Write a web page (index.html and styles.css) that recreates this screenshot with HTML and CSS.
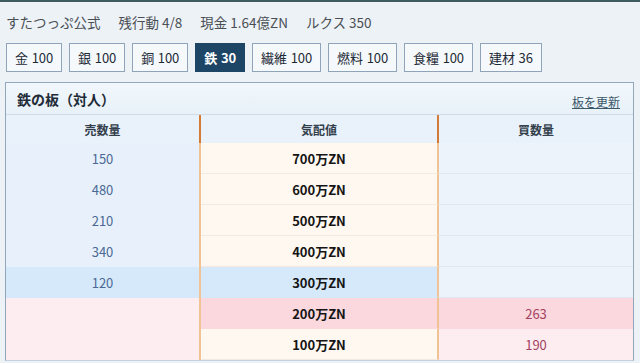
FILE: index.html
```html
<!DOCTYPE html>
<html lang="ja">
<head>
<meta charset="utf-8">
<link rel="stylesheet" href="styles.css">
</head>
<body>
<div class="status">
  <span>すたつっぷ公式</span><span>残行動 4/8</span><span>現金 1.64億ZN</span><span>ルクス 350</span>
</div>
<div class="tabs">
  <div class="tab">金 100</div>
  <div class="tab">銀 100</div>
  <div class="tab">銅 100</div>
  <div class="tab active">鉄 30</div>
  <div class="tab">繊維 100</div>
  <div class="tab">燃料 100</div>
  <div class="tab">食糧 100</div>
  <div class="tab">建材 36</div>
</div>
<div class="panel">
  <div class="panel-head">
    <span class="title">鉄の板（対人）</span>
    <a class="refresh" href="#">板を更新</a>
  </div>
  <div class="book">
    <div class="th sell">売数量</div><div class="th price">気配値</div><div class="th buy">買数量</div>

    <div class="td sell">150</div><div class="td price">700万ZN</div><div class="td buy"></div>
    <div class="td sell">480</div><div class="td price">600万ZN</div><div class="td buy"></div>
    <div class="td sell">210</div><div class="td price">500万ZN</div><div class="td buy"></div>
    <div class="td sell">340</div><div class="td price">400万ZN</div><div class="td buy"></div>
    <div class="td sell best">120</div><div class="td price best">300万ZN</div><div class="td buy"></div>
    <div class="td sell pinkrow"></div><div class="td price bestbid">200万ZN</div><div class="td buy bestbid">263</div>
    <div class="td sell pinkrow"></div><div class="td price">100万ZN</div><div class="td buy pinkrow">190</div>
  </div>
</div>
</body>
</html>
```
FILE: styles.css
```css
html, body {
  margin: 0;
  padding: 0;
}
body {
  background: #edf2f7;
  border-top: 2px solid #3f5b60;
  font-family: "Noto Sans CJK JP", "Noto Sans", sans-serif;
  color: #3a3f45;
  height: 361px;
  overflow: hidden;
}
.status {
  display: flex;
  gap: 18px;
  padding: 11px 6px 0 6px;
  font-size: 13.5px;
  line-height: 18px;
  color: #4a4f55;
}
.tabs {
  display: flex;
  gap: 7px;
  margin-top: 12px;
  padding-left: 6px;
}
.tab {
  height: 27px;
  display: flex;
  align-items: center;
  padding: 0 8px;
  border: 1px solid #8fa4b8;
  background: #f5f9fc;
  font-size: 13px;
  color: #1e2a36;
  white-space: pre;
  letter-spacing: -0.1px;
  word-spacing: 1px;
}
.tab.active {
  background: #1d4566;
  border-color: #1d4566;
  color: #ffffff;
  font-weight: 700;
}
.panel {
  margin: 10px 6px 0 5px;
  border: 1px solid #92a7ba;
  border-bottom-color: #c2d2e0;
  background: #ecf3fb;
}
.panel-head {
  height: 31px;
  display: flex;
  align-items: center;
  justify-content: space-between;
  padding: 0 13px 0 11px;
  background: linear-gradient(#f1f7fc, #e8f1f9);
  border-bottom: 1px solid #cfdce8;
}
.title {
  font-weight: 700;
  font-size: 14px;
  color: #1f2c38;
}
.refresh {
  font-size: 12px;
  color: #3b5869;
  text-decoration: underline;
  margin-top: 6px;
}
.book {
  display: grid;
  grid-template-columns: 195px 238px 1fr;
}
.th {
  height: 28px;
  display: flex;
  align-items: center;
  justify-content: center;
  font-size: 12px;
  font-weight: 700;
  color: #33404c;
  background: #e9f2fb;
}
.th.sell, .th.price {
  border-right: 2px solid #d27a36;
}
.td {
  height: 31px;
  box-sizing: border-box;
  display: flex;
  align-items: center;
  justify-content: center;
  font-size: 13px;
}
.td.sell {
  background: #e8f1fb;
  color: #4b6994;
  border-right: 2px solid #efc393;
}
.td.price {
  background: #fff8f1;
  color: #151515;
  font-weight: 700;
  border-right: 2px solid #efc393;
  border-bottom: 1px solid #f3e9e0;
}
.td.buy {
  background: #ecf3fb;
  color: #a2425e;
  border-bottom: 1px solid #e0e9f2;
}
.td.best {
  background: #d6e9fb;
  border-bottom-color: #d6e9fb;
}
.td.bestbid {
  background: #fbd8de;
  border-bottom-color: #fbd8de;
}
.td.pinkrow {
  background: #fdedf0;
  border-bottom-color: #fdedf0;
}
```
